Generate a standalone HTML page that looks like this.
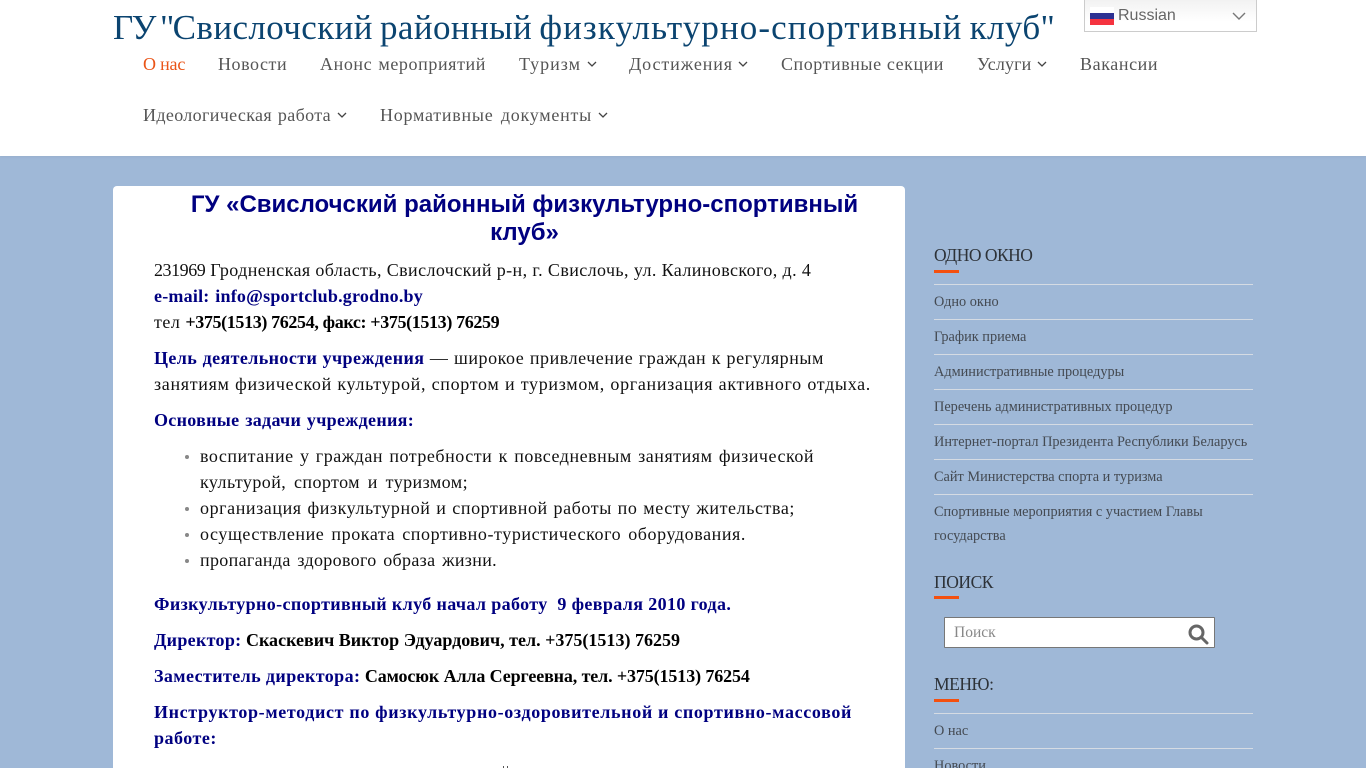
<!DOCTYPE html>
<html lang="ru">
<head>
<meta charset="utf-8">
<title>ГУ "Свислочский районный физкультурно-спортивный клуб"</title>
<style>
*{box-sizing:border-box}
html,body{margin:0;padding:0;width:1366px;height:768px;overflow:hidden}
body{background:#9fb8d7;font-family:"Liberation Serif","Noto Serif CJK SC",serif;position:relative}
header{position:absolute;left:0;top:0;width:1366px;height:156px;background:#fff;box-shadow:0 1px 2px rgba(140,160,190,.35)}
.t{position:absolute;white-space:nowrap;margin:0;padding:0}
.j{text-align:justify;text-align-last:justify}
#title{left:113px;top:6px;font-size:35px;line-height:44px;color:#0b4470;font-weight:normal;letter-spacing:.4px;word-spacing:-2px}
.n{font-size:18px;line-height:26px;color:#555;height:26px}
.chev{position:absolute;fill:none;stroke:#444;stroke-width:1.3}
#lang{position:absolute;left:1084px;top:-1px;width:173px;height:33px;border:1px solid #ccc;background:linear-gradient(#f2f2f2,#fff 70%)}
#lang span{position:absolute;left:33px;top:6px;font:16px/20px "Liberation Sans",sans-serif;color:#666}
#card{position:absolute;left:113px;top:186px;width:792px;height:600px;background:#fff;border-radius:4px}
h1.c{position:absolute;margin:0;text-align:center;font:bold 24px/28px "Liberation Sans",sans-serif;color:#000080}
.b{font-size:18px;line-height:26px;height:26px;color:#111}
.nv{color:#000080;font-weight:bold}
.k{color:#000;font-weight:bold}
.dot{position:absolute;left:185px;width:4px;height:4px;border-radius:50%;background:#888}
.h{font-size:17.5px;line-height:24px;color:#2d3238;letter-spacing:-.45px}
.bar{position:absolute;left:934px;width:25px;height:3px;background:#f4500f}
.ln{position:absolute;left:934px;width:319px;height:1px;background:#d5dbe3}
.s{font-size:14.3px;line-height:20px;color:#444a52}
#search{position:absolute;left:944px;top:617px;width:271px;height:31px;background:#fff;border:1px solid #777;border-radius:1px}
#search span{position:absolute;left:9px;top:4px;font-size:15.5px;line-height:22px;color:#888}
</style>
</head>
<body>
<header>
<div class="t" id="title"><span style="letter-spacing:-1.6px">ГУ "</span>Свислочский районный <span style="letter-spacing:1.1px">физкультурно-спортивный</span> клуб"</div>
<nav>
<a class="t n" style="left:143px;top:51px;color:#ea5417;letter-spacing:-.2px">О нас</a>
<a class="t n" style="left:218px;top:51px;letter-spacing:.55px">Новости</a>
<a class="t n j" style="left:320px;top:51px;width:166px;letter-spacing:.6px">Анонс мероприятий</a>
<a class="t n" style="left:519px;top:51px;letter-spacing:1px">Туризм</a>
<svg class="chev" style="left:587px;top:61px" width="10" height="7" viewBox="0 0 10 7"><path d="M1 1l4 4 4-4"/></svg>
<a class="t n" style="left:629px;top:51px;letter-spacing:.9px">Достижения</a>
<svg class="chev" style="left:738px;top:61px" width="10" height="7" viewBox="0 0 10 7"><path d="M1 1l4 4 4-4"/></svg>
<a class="t n j" style="left:781px;top:51px;width:163px;letter-spacing:.55px">Спортивные секции</a>
<a class="t n" style="left:977px;top:51px;letter-spacing:.15px">Услуги</a>
<svg class="chev" style="left:1037px;top:61px" width="10" height="7" viewBox="0 0 10 7"><path d="M1 1l4 4 4-4"/></svg>
<a class="t n" style="left:1080px;top:51px;letter-spacing:.6px">Вакансии</a>
<a class="t n j" style="left:143px;top:102px;width:188px;letter-spacing:.35px">Идеологическая работа</a>
<svg class="chev" style="left:337px;top:112px" width="10" height="7" viewBox="0 0 10 7"><path d="M1 1l4 4 4-4"/></svg>
<a class="t n j" style="left:380px;top:102px;width:212px;letter-spacing:.75px">Нормативные документы</a>
<svg class="chev" style="left:598px;top:112px" width="10" height="7" viewBox="0 0 10 7"><path d="M1 1l4 4 4-4"/></svg>
</nav>
<div id="lang">
<svg style="position:absolute;left:5px;top:7px" width="24" height="18" viewBox="0 0 24 18"><rect width="24" height="6" fill="#fff"/><rect y="6" width="24" height="6" fill="#2e3192"/><rect y="12" width="24" height="6" fill="#f5333f"/></svg>
<span>Russian</span>
<svg style="position:absolute;left:147px;top:12px" width="14" height="9" viewBox="0 0 14 9" fill="none" stroke="#777" stroke-width="1.4"><path d="M1 1l6 6 6-6"/></svg>
</div>
</header>

<main>
<div id="card"></div>
<h1 class="c" style="left:154px;top:191px;width:741px">ГУ «Свислочский районный физкультурно-спортивный клуб»</h1>
<div class="t b j" style="left:154px;top:257px;width:657px;letter-spacing:.4px"><span style="letter-spacing:-.45px">231969</span> Гродненская область, Свислочский р-н, г. Свислочь, ул. Калиновского, д. 4</div>
<div class="t b j nv" style="left:154px;top:283px;width:269px;letter-spacing:.22px">e-mail: info@sportclub.grodno.by</div>
<div class="t b" style="left:154px;top:309px;letter-spacing:.5px">тел <span class="k" style="letter-spacing:-.36px">+375(1513) 76254, факс: +375(1513) 76259</span></div>
<div class="t b j" style="left:154px;top:345px;width:670px;letter-spacing:.55px"><span class="nv" style="letter-spacing:.4px">Цель деятельности учреждения</span> — широкое привлечение граждан к регулярным</div>
<div class="t b j" style="left:154px;top:371px;width:717px;letter-spacing:.68px">занятиям физической культурой, спортом и туризмом, организация активного отдыха.</div>
<div class="t b j nv" style="left:154px;top:407px;width:260px;letter-spacing:.3px">Основные задачи учреждения:</div>
<i class="dot" style="top:455px"></i>
<div class="t b j" style="left:200px;top:443px;width:614px;letter-spacing:.52px">воспитание у граждан потребности к повседневным занятиям физической</div>
<div class="t b j" style="left:200px;top:469px;width:268px;letter-spacing:.42px">культурой, спортом и туризмом;</div>
<i class="dot" style="top:507px"></i>
<div class="t b j" style="left:200px;top:495px;width:595px;letter-spacing:.58px">организация физкультурной и спортивной работы по месту жительства;</div>
<i class="dot" style="top:533px"></i>
<div class="t b j" style="left:200px;top:521px;width:546px;letter-spacing:.58px">осуществление проката спортивно-туристического оборудования.</div>
<i class="dot" style="top:559px"></i>
<div class="t b j" style="left:200px;top:547px;width:297px;letter-spacing:.33px">пропаганда здорового образа жизни.</div>
<div class="t b nv" style="left:154px;top:591px;letter-spacing:.37px">Физкультурно-спортивный клуб начал работу&nbsp; 9 февраля 2010 года.</div>
<div class="t b" style="left:154px;top:627px"><span class="nv" style="letter-spacing:.3px">Директор:</span> <span class="k" style="letter-spacing:.01px">Скаскевич Виктор Эдуардович, тел. +375(1513) 76259</span></div>
<div class="t b" style="left:154px;top:663px"><span class="nv" style="letter-spacing:.4px">Заместитель директора:</span> <span class="k" style="letter-spacing:-.12px">Самосюк Алла Сергеевна, тел. +375(1513) 76254</span></div>
<div class="t b j nv" style="left:154px;top:699px;width:698px;letter-spacing:.65px">Инструктор-методист по физкультурно-оздоровительной и спортивно-массовой</div>
<div class="t b nv" style="left:154px;top:725px;letter-spacing:.5px">работе:</div>
<i style="position:absolute;left:503px;top:766px;width:1px;height:2px;background:#555"></i>
<i style="position:absolute;left:507px;top:766px;width:1px;height:2px;background:#555"></i>
</main>

<aside>
<div class="t h" style="left:934px;top:243px;letter-spacing:-.5px">ОДНО ОКНО</div>
<i class="bar" style="top:270px"></i>
<i class="ln" style="top:284px"></i>
<div class="t s" style="left:934px;top:292px">Одно окно</div>
<i class="ln" style="top:319px"></i>
<div class="t s" style="left:934px;top:327px">График приема</div>
<i class="ln" style="top:354px"></i>
<div class="t s" style="left:934px;top:362px">Административные процедуры</div>
<i class="ln" style="top:389px"></i>
<div class="t s" style="left:934px;top:397px">Перечень административных процедур</div>
<i class="ln" style="top:424px"></i>
<div class="t s" style="left:934px;top:432px">Интернет-портал Президента Республики Беларусь</div>
<i class="ln" style="top:459px"></i>
<div class="t s" style="left:934px;top:467px">Сайт Министерства спорта и туризма</div>
<i class="ln" style="top:494px"></i>
<div class="t s" style="left:934px;top:502px">Спортивные мероприятия с участием Главы</div>
<div class="t s" style="left:934px;top:526px">государства</div>

<div class="t h" style="left:934px;top:570px">ПОИСК</div>
<i class="bar" style="top:596px"></i>
<div id="search"><span>Поиск</span>
<svg style="position:absolute;left:243px;top:6px" width="21" height="21" viewBox="0 0 21 21" fill="none" stroke="#666" stroke-width="3"><circle cx="8.5" cy="8.5" r="6.5"/><path d="M13.5 13.5l5.5 5.5" stroke-linecap="round"/></svg>
</div>

<div class="t h" style="left:934px;top:672px">МЕНЮ:</div>
<i class="bar" style="top:699px"></i>
<i class="ln" style="top:713px"></i>
<div class="t s" style="left:934px;top:721px">О нас</div>
<i class="ln" style="top:748px"></i>
<div class="t s" style="left:934px;top:756px">Новости</div>
</aside>
</body>
</html>
